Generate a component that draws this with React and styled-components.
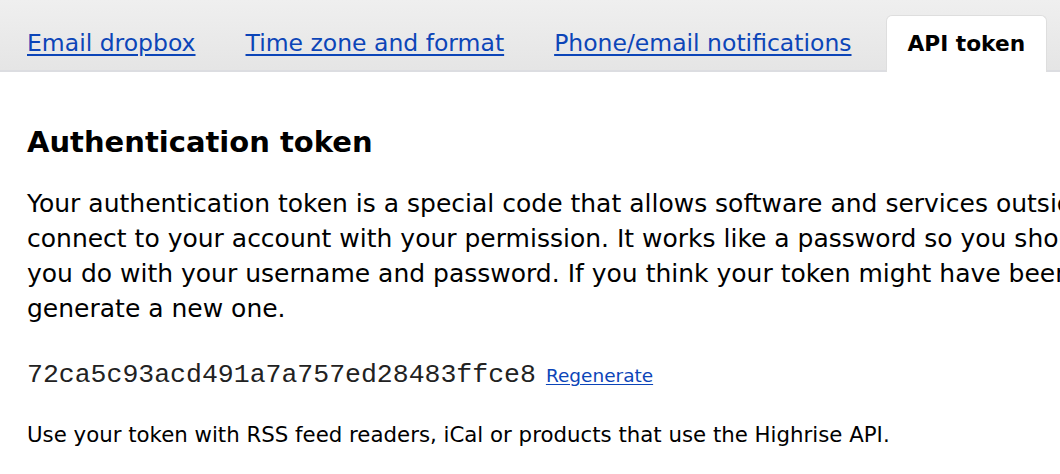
import React from "react";
import styled, { createGlobalStyle } from "styled-components";

const GlobalStyle = createGlobalStyle`
  html, body {
    margin: 0;
    padding: 0;
    background: #fff;
    overflow: hidden;
  }
  body {
    font-family: "DejaVu Sans", "Noto Sans", sans-serif;
    color: #111;
  }
`;

const Page = styled.div`
  width: 1400px;
`;

const TabBar = styled.nav`
  display: flex;
  align-items: flex-end;
  height: 70px;
  padding-left: 5px;
  gap: 6px;
  background: linear-gradient(#efefef, #e5e5e5);
  border-bottom: 2px solid #dcdde1;
`;

const Tab = styled.a`
  display: flex;
  align-items: center;
  box-sizing: border-box;
  padding: 0 21px;
  white-space: nowrap;
  font-size: ${({ $active }) => ($active ? "21.7px" : "23.5px")};
  color: ${({ $active }) => ($active ? "#000" : "#0c45b8")};
  font-weight: ${({ $active }) => ($active ? "bold" : "normal")};
  text-decoration: ${({ $active }) => ($active ? "none" : "underline")};
  text-underline-offset: 3px;
  background: ${({ $active }) => ($active ? "#fff" : "transparent")};
  border: 1px solid ${({ $active }) => ($active ? "#dedede" : "transparent")};
  border-bottom: none;
  border-radius: 6px 6px 0 0;
  margin-left: ${({ $active }) => ($active ? "6px" : "0")};
  margin-bottom: ${({ $active }) => ($active ? "-2px" : "0")};
  height: ${({ $active }) => ($active ? "57px" : "55px")};
  padding-bottom: ${({ $active }) => ($active ? "2px" : "0")};
`;

const Content = styled.main`
  padding: 0 27px;
`;

const Heading = styled.h2`
  margin: 0;
  padding-top: 50px;
  font-size: 29px;
  font-weight: bold;
  line-height: 40px;
  color: #000;
`;

const Paragraph = styled.p`
  margin: 24px 0 0;
  font-size: 25px;
  line-height: 35px;
  white-space: nowrap;
  color: #000;
`;

const TokenRow = styled.div`
  display: flex;
  align-items: baseline;
  gap: 10px;
  margin-top: 34px;
`;

const Token = styled.code`
  font-family: "Liberation Mono", "Courier New", monospace;
  font-size: 26.5px;
  color: #222;
`;

const SmallLink = styled.a`
  font-size: 18.5px;
  color: #0c45b8;
  text-decoration: underline;
  text-underline-offset: 2px;
`;

const Note = styled.p`
  margin: 32px 0 0;
  font-size: 21.3px;
  line-height: 26px;
  color: #000;
`;

const tabs = [
  { label: "Email dropbox" },
  { label: "Time zone and format" },
  { label: "Phone/email notifications" },
  { label: "API token", active: true },
];

export default function App() {
  return (
    <Page>
      <GlobalStyle />
      <TabBar>
        {tabs.map((t) => (
          <Tab key={t.label} href="#" $active={t.active}>
            {t.label}
          </Tab>
        ))}
      </TabBar>
      <Content>
        <Heading>Authentication token</Heading>
        <Paragraph>
          Your authentication token is a special code that allows software and services outside Highrise to
          <br />
          connect to your account with your permission. It works like a password so you should keep it as secure as
          <br />
          you do with your username and password. If you think your token might have been compromised, you can
          <br />
          generate a new one.
        </Paragraph>
        <TokenRow>
          <Token>72ca5c93acd491a7a757ed28483ffce8</Token>
          <SmallLink href="#">Regenerate</SmallLink>
        </TokenRow>
        <Note>Use your token with RSS feed readers, iCal or products that use the Highrise API.</Note>
      </Content>
    </Page>
  );
}
